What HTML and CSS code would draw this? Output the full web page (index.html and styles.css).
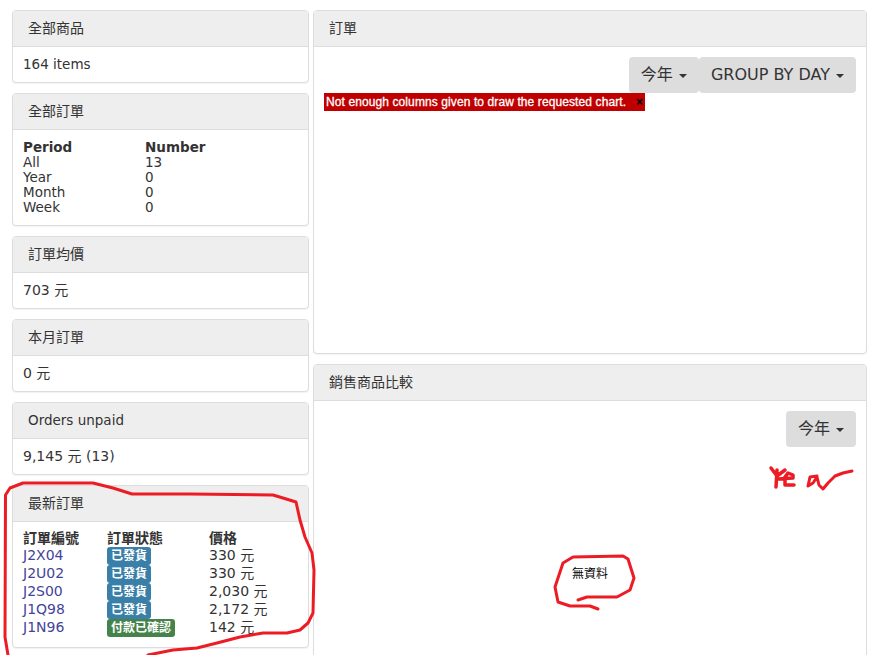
FILE: index.html
```html
<!DOCTYPE html>
<html lang="zh-Hant">
<head>
  <meta charset="UTF-8">
  <meta name="viewport" content="width=device-width, initial-scale=1.0">
  <title>訂單</title>
  <link rel="stylesheet" href="styles.css">
</head>
<body>
  <div class="dashboard">

    <div class="col-left">
      <div class="panel">
        <div class="panel-heading">全部商品</div>
        <div class="panel-body panel-body-items">164 items</div>
      </div>

      <div class="panel">
        <div class="panel-heading">全部訂單</div>
        <div class="panel-body">
          <table class="stats">
            <tr><th class="stats-period">Period</th><th>Number</th></tr>
            <tr><td>All</td><td>13</td></tr>
            <tr><td>Year</td><td>0</td></tr>
            <tr><td>Month</td><td>0</td></tr>
            <tr><td>Week</td><td>0</td></tr>
          </table>
        </div>
      </div>

      <div class="panel">
        <div class="panel-heading">訂單均價</div>
        <div class="panel-body">703 元</div>
      </div>

      <div class="panel">
        <div class="panel-heading">本月訂單</div>
        <div class="panel-body">0 元</div>
      </div>

      <div class="panel">
        <div class="panel-heading panel-heading-latin">Orders unpaid</div>
        <div class="panel-body">9,145 元 (13)</div>
      </div>

      <div class="panel">
        <div class="panel-heading">最新訂單</div>
        <div class="panel-body">
          <table class="orders">
            <tr class="orders-head"><th class="orders-id">訂單編號</th><th class="orders-status">訂單狀態</th><th>價格</th></tr>
            <tr><td><a href="#">J2X04</a></td><td><span class="label label-info">已發貨</span></td><td>330 元</td></tr>
            <tr><td><a href="#">J2U02</a></td><td><span class="label label-info">已發貨</span></td><td>330 元</td></tr>
            <tr><td><a href="#">J2S00</a></td><td><span class="label label-info">已發貨</span></td><td>2,030 元</td></tr>
            <tr><td><a href="#">J1Q98</a></td><td><span class="label label-info">已發貨</span></td><td>2,172 元</td></tr>
            <tr><td><a href="#">J1N96</a></td><td><span class="label label-success">付款已確認</span></td><td>142 元</td></tr>
          </table>
        </div>
      </div>
    </div>

    <div class="col-right">
      <div class="panel panel-orders">
        <div class="panel-heading">訂單</div>
        <div class="panel-body chart-body">
          <div class="btn-row">
            <button class="btn">今年 <span class="caret"></span></button>
            <button class="btn">GROUP BY DAY <span class="caret"></span></button>
          </div>
          <div class="chart-error"><span>Not enough columns given to draw the requested chart.</span><span class="chart-error-x">×</span></div>
        </div>
      </div>

      <div class="panel panel-compare">
        <div class="panel-heading">銷售商品比較</div>
        <div class="panel-body chart-body">
          <div class="btn-row">
            <button class="btn">今年 <span class="caret"></span></button>
          </div>
          <div class="no-data">無資料</div>
        </div>
      </div>
    </div>

  </div>

  <!-- red pen marks drawn on top of the screenshot -->
  <svg class="scribbles" width="876" height="655" viewBox="0 0 876 655" fill="none" stroke="#ed1c24" stroke-width="3" stroke-linecap="round" stroke-linejoin="round">
    <path d="M8 655 L5 637 L5.500 495 L10 488 L23 483 L93 483 L113 488 L132 494 L190 494 L273 495 L283 498 L296 502 L300 520 L305 537 L312 553 L314 570 L313 613 L308 623 L300 630 L287 633 L263 633 L240 637 L217 643 L197 648 L173 650 L148 655"/>
    <path d="M578 600 L587 597 L617 597 L630 590 L634 578 L628 559 L623 556 L573 557 L563 563 L555 587 L558 602 L570 606 L590 606 L598 609"/>
    <path stroke-width="3.500" d="M771 468 L777 476 M776 487 L777 470 M785 470 L777 476 M778 479 L793 478 L793 475 L788 473 L785 477 L785 485 L794 485"/>
    <path d="M817 476 L810 477 L808 486 L813 483 L817 477 L819 485 L823 489 L828 483 L835 476 L843 473 L852 471"/>
  </svg>
</body>
</html>
```

FILE: styles.css
```css
* { margin: 0; padding: 0; box-sizing: border-box; }
html, body { height: 100%; overflow: hidden; }
body { font-family: Tahoma, "DejaVu Sans", "Noto Sans CJK TC", sans-serif; font-size: 14px; line-height: 15px; color: #333; background: white; }
a { color: #449; text-decoration: none; }

.dashboard { display: flex; gap: 4px; padding: 10px 9px 0 12px; }
.col-left { width: 297px; flex-shrink: 0; }
.col-right { flex: 1; }

.panel { background: white; border: 1px solid #ddd; border-radius: 4px; margin-bottom: 10px; box-shadow: 0 1px 1px rgba(0,0,0,0.05); }
.panel-heading { height: 36px; padding: 0 15px; line-height: 34px; font-size: 14px; background: #eee; border-bottom: 1px solid #ddd; border-radius: 3px 3px 0 0; }
.panel-heading-latin { font-size: 13.5px; }
.panel-body { padding: 10px; line-height: 15px; }
.panel-body-items { font-size: 13.5px; }

.stats, .orders { border-collapse: collapse; }
.stats { font-size: 13.5px; }
.stats th, .orders th { text-align: left; font-weight: bold; padding: 0; }
.stats td, .orders td { padding: 0; }
.stats-period { width: 122px; }

.orders td { line-height: 17px; padding-bottom: 1px; }
.orders-head th { line-height: 13px; padding-bottom: 2px; }
.orders-id { width: 84px; }
.orders-status { width: 102px; }
.label { display: inline-block; margin-bottom: -1px; padding: 0 4px; border-radius: 3px; font-size: 12px; font-weight: bold; line-height: 18px; color: white; vertical-align: top; }
.label-info { background: #3a7fa8; }
.label-success { background: #45834a; }

.panel-orders { height: 344px; }
.panel-compare { height: 400px; }
.chart-body { position: relative; }
.btn-row { display: flex; justify-content: flex-end; }
.btn { height: 36px; padding: 0 12px; border: none; border-radius: 4px; background: #ddd; color: #333; font-family: inherit; font-size: 16px; line-height: 16px; }
.caret { display: inline-block; width: 0; height: 0; margin-left: 1px; vertical-align: middle; border-top: 4px solid #333; border-left: 4px solid transparent; border-right: 4px solid transparent; }

.chart-error { display: flex; justify-content: space-between; width: 321px; height: 18px; padding: 0 2px; background: #c00000; color: white; font-family: "Liberation Sans", Arial, sans-serif; font-size: 12px; letter-spacing: 0.1px; -webkit-text-stroke: 0.3px white; line-height: 18px; white-space: nowrap; }
.chart-error-x { color: black; font-weight: bold; -webkit-text-stroke: 0; }

.no-data { position: absolute; left: 258px; top: 164px; font-family: "Noto Sans CJK TC", sans-serif; font-size: 12px; color: black; }

.scribbles { position: absolute; left: 0; top: 0; pointer-events: none; }
```
